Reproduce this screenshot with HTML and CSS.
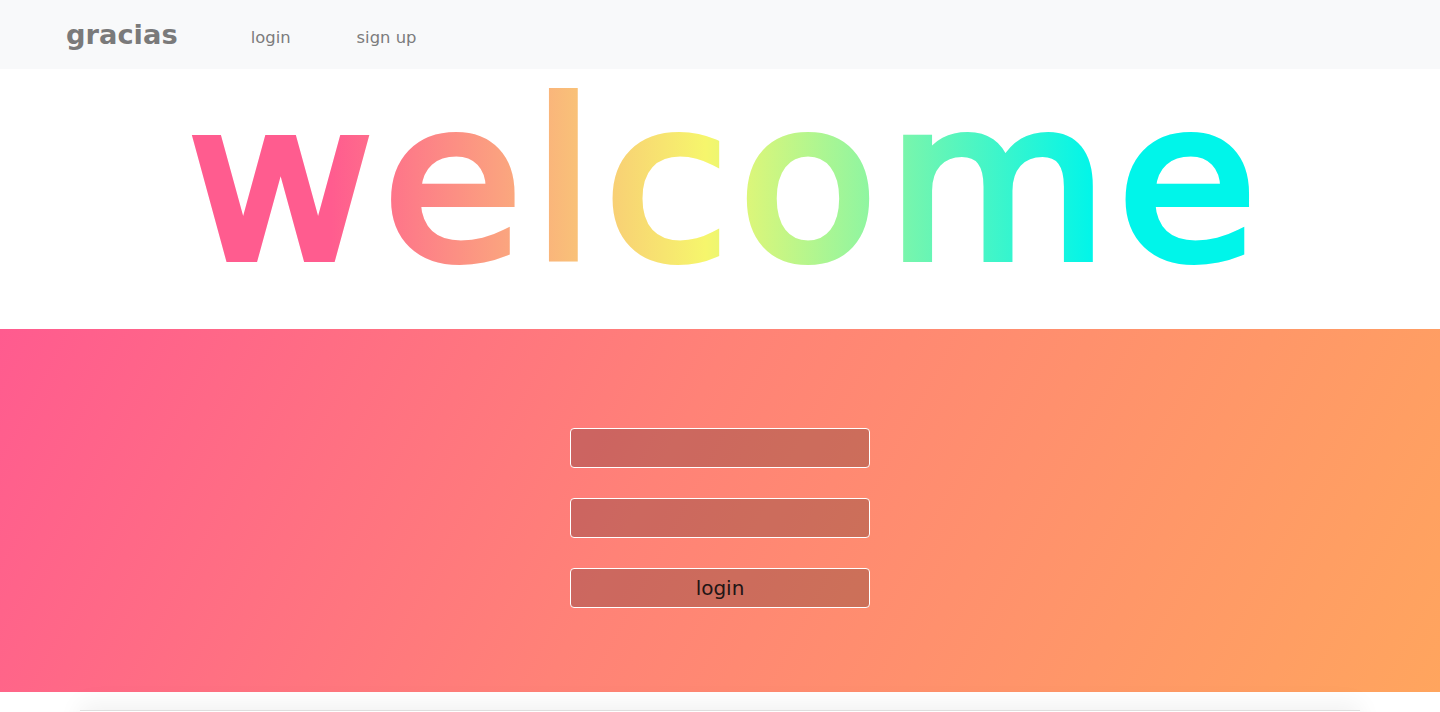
FILE: index.html
```html
<!DOCTYPE html>
<html lang="en">
<head>
<meta charset="utf-8">
<title>gracias</title>
<link rel="stylesheet" href="styles.css">
</head>
<body>
<nav class="navbar">
  <a class="brand" href="#">gracias</a>
  <a class="nav-link" href="#">login</a>
  <a class="nav-link" href="#">sign up</a>
</nav>
<header class="hero">
  <svg class="welcome" width="1440" height="260" viewBox="0 0 1440 260" role="img" aria-label="welcome">
    <defs>
      <linearGradient id="welcomeGrad" gradientUnits="userSpaceOnUse" x1="-695" y1="0" x2="682" y2="0">
        <stop offset="0.23" stop-color="#ff5c8f"/>
        <stop offset="0.49" stop-color="#f6f66c"/>
        <stop offset="0.76" stop-color="#00f5ea"/>
      </linearGradient>
    </defs>
    <g transform="translate(727 189) scale(1.046 1)">
      <text class="welcome-text" x="0" y="0" text-anchor="middle">welcome</text>
    </g>
  </svg>
</header>
<section class="login-section">
  <form class="login-form">
    <input class="field" type="text" aria-label="username">
    <input class="field" type="password" aria-label="password">
    <button class="field btn" type="button">login</button>
  </form>
</section>
<footer class="footer"></footer>
</body>
</html>
```

FILE: styles.css
```css
html, body {
  margin: 0;
  padding: 0;
  overflow: hidden;
  background: #fff;
  font-family: "DejaVu Sans", "Liberation Sans", sans-serif;
}

.navbar {
  height: 69px;
  background: #f8f9fa;
  display: flex;
  align-items: center;
  padding-left: 66px;
}

.brand {
  font-weight: bold;
  font-size: 27.3px;
  color: #7a7a7a;
  text-decoration: none;
  margin-right: 40px;
}

.nav-link {
  font-size: 16.4px;
  color: #7c7c7d;
  text-decoration: none;
  padding: 6px 33px 0;
}

.hero {
  height: 260px;
}

.welcome {
  display: block;
  overflow: visible;
}

.welcome-text {
  font-family: "DejaVu Sans", sans-serif;
  font-size: 217px;
  letter-spacing: 9px;
  fill: url(#welcomeGrad);
  stroke: url(#welcomeGrad);
  stroke-width: 8px;
  stroke-linejoin: miter;
}

.login-section {
  height: 363px;
  box-sizing: border-box;
  padding-top: 99px;
  background: linear-gradient(118deg, #ff5b8f 0%, #ff8277 45%, #ffa55e 100%);
}

.login-form {
  width: 300px;
  margin: 0 auto;
  display: flex;
  flex-direction: column;
  gap: 30px;
}

.field {
  height: 40px;
  box-sizing: border-box;
  border: 1px solid #fff;
  border-radius: 4px;
  background: rgba(0, 0, 0, 0.2);
  font-family: "DejaVu Sans", sans-serif;
  outline: none;
  padding: 0 10px;
}

.btn {
  font-size: 20px;
  color: #221515;
  cursor: pointer;
}

.footer {
  margin: 18px 80px 0;
  height: 60px;
  border-top: 1px solid #dedede;
  box-shadow: 0 -6px 24px rgba(0, 0, 0, 0.06);
}
```
